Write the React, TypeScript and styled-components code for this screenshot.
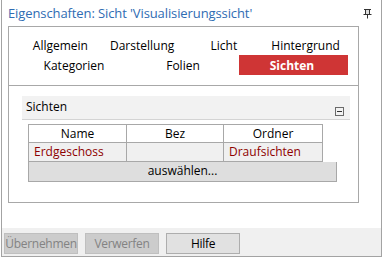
import React from "react";
import styled, { createGlobalStyle } from "styled-components";

const GlobalStyle = createGlobalStyle`
  html, body {
    margin: 0;
    padding: 0;
    background: #ffffff;
  }
  body {
    font-family: "Open Sans", "Noto Sans", "Liberation Sans", sans-serif;
    font-size: 12px;
    color: #000;
  }
`;

const Window = styled.div`
  box-sizing: border-box;
  width: 381px;
  height: 257px;
  margin-left: 1px;
  border: 1px solid #a3a3a3;
  border-top: none;
  display: flex;
  flex-direction: column;
  background: #fff;
`;

const TitleBar = styled.div`
  height: 26px;
  display: flex;
  align-items: center;
  justify-content: space-between;
  padding: 0 9px 0 6px;
`;

const Title = styled.div`
  font-size: 13px;
  color: #2f6cb3;
  letter-spacing: -0.1px;
`;

const Panel = styled.div`
  box-sizing: border-box;
  width: 351px;
  height: 177px;
  margin-left: 6px;
  border: 1px solid #a8a8a8;
`;

const Tabs = styled.div`
  padding: 8px 0 10px 12px;
  border-bottom: 1px solid #a8a8a8;
  display: flex;
  flex-direction: column;
`;

const TabRow = styled.div<{ cols: number }>`
  display: grid;
  grid-template-columns: repeat(${(p) => p.cols}, 1fr);
  width: 327px;
  height: 20px;
`;

const Tab = styled.div<{ active?: boolean }>`
  display: flex;
  align-items: center;
  justify-content: center;
  padding-right: 3px;
  background: ${(p) => (p.active ? "#cf3535" : "transparent")};
  color: ${(p) => (p.active ? "#fff" : "#000")};
  font-weight: ${(p) => (p.active ? 700 : 400)};
`;

const Group = styled.div`
  margin: 10px 0 0 13px;
  width: 328px;
`;

const GroupHeader = styled.div`
  height: 23px;
  background: #f2f2f2;
  border-bottom: 1px solid #d4d4d4;
  display: flex;
  justify-content: space-between;
  padding: 0 6px 0 4px;
`;

const GroupTitle = styled.span`
  line-height: 22px;
`;

const Collapse = styled.span`
  box-sizing: border-box;
  align-self: flex-end;
  margin-bottom: 3px;
  width: 9px;
  height: 9px;
  border: 1px solid #6a6a6a;
  display: flex;
  align-items: center;
  justify-content: center;
  &::after {
    content: "";
    width: 5px;
    height: 1px;
    background: #333;
  }
`;

const Table = styled.div`
  margin: 4px 0 0 6px;
  display: grid;
  grid-template-columns: 99px 97px 99px;
  width: 309px;
`;

const Cell = styled.div<{ head?: boolean; left?: boolean }>`
  box-sizing: border-box;
  height: 19px;
  border: 1px solid #a8a8a8;
  border-left: none;
  border-top: ${(p) => (p.head ? "1px solid #a8a8a8" : "none")};
  &:nth-child(3n + 1) {
    border-left: 1px solid #a8a8a8;
  }
  background: ${(p) => (p.head ? "#fff" : "#f0f0f0")};
  color: ${(p) => (p.head ? "#000" : "#8e0000")};
  text-align: ${(p) => (p.left ? "left" : "center")};
  padding-left: ${(p) => (p.left ? "5px" : "0")};
  line-height: 17px;
  white-space: nowrap;
`;

const SelectButton = styled.div`
  box-sizing: border-box;
  grid-column: 1 / -1;
  width: 309px;
  height: 20px;
  background: #dedede;
  border: 1px solid #a8a8a8;
  border-top: none;
  text-align: center;
  line-height: 18px;
`;

const Spacer = styled.div`
  flex: 1;
`;

const ButtonBar = styled.div`
  height: 28px;
  background: #f0f0f0;
  display: flex;
  gap: 7px;
  padding: 5px 0 0 2px;
  box-sizing: border-box;
`;

const Button = styled.div<{ disabled?: boolean }>`
  box-sizing: border-box;
  width: 74px;
  height: 21px;
  display: flex;
  align-items: center;
  justify-content: center;
  letter-spacing: -0.3px;
  background: ${(p) => (p.disabled ? "#cccccc" : "#e1e1e1")};
  border: 1px solid ${(p) => (p.disabled ? "#bfbfbf" : "#adadad")};
  color: ${(p) => (p.disabled ? "#838383" : "#000")};
`;

const PinIcon = () => (
  <svg width="9" height="11" viewBox="0 0 9 11">
    <rect x="2" y="1" width="5" height="5" fill="#ddd" />
    <path d="M1 1.5h7M2.5 1.5v4.5M6.5 1.5v4.5M0.5 6.5h8M4.5 6.5v4" stroke="#333" strokeWidth="1" fill="none" />
  </svg>
);

export default function App() {
  return (
    <>
      <GlobalStyle />
      <Window>
        <TitleBar>
          <Title>Eigenschaften: Sicht 'Visualisierungssicht'</Title>
          <PinIcon />
        </TitleBar>
        <Panel>
          <Tabs>
            <TabRow cols={4}>
              <Tab>Allgemein</Tab>
              <Tab>Darstellung</Tab>
              <Tab>Licht</Tab>
              <Tab>Hintergrund</Tab>
            </TabRow>
            <TabRow cols={3}>
              <Tab>Kategorien</Tab>
              <Tab>Folien</Tab>
              <Tab active>Sichten</Tab>
            </TabRow>
          </Tabs>
          <Group>
            <GroupHeader>
              <GroupTitle>Sichten</GroupTitle>
              <Collapse />
            </GroupHeader>
            <Table>
              <Cell head>Name</Cell>
              <Cell head>Bez</Cell>
              <Cell head>Ordner</Cell>
              <Cell left>Erdgeschoss</Cell>
              <Cell />
              <Cell left>Draufsichten</Cell>
              <SelectButton>auswählen...</SelectButton>
            </Table>
          </Group>
        </Panel>
        <Spacer />
        <ButtonBar>
          <Button disabled>Übernehmen</Button>
          <Button disabled>Verwerfen</Button>
          <Button>Hilfe</Button>
        </ButtonBar>
      </Window>
    </>
  );
}
